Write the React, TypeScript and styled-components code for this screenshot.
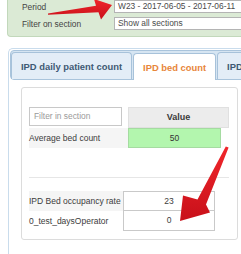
import React from "react";
import styled, { createGlobalStyle } from "styled-components";

const GlobalStyle = createGlobalStyle`
  html, body {
    margin: 0;
    padding: 0;
    background: #fff;
  }
  body {
    font-family: "Liberation Sans", Arial, sans-serif;
    color: #333;
  }
`;

const Page = styled.div`
  position: relative;
  width: 241px;
  height: 254px;
  overflow: hidden;
  padding-left: 7px;
  box-sizing: border-box;
`;

const FilterPanel = styled.div`
  width: 260px;
  box-sizing: border-box;
  background: #dbead5;
  border: 1px solid #c2d8bb;
  border-top: none;
  border-right: none;
  border-bottom-left-radius: 4px;
  padding: 0 0 6px 14px;
  display: grid;
  grid-template-columns: 92px 1fr;
  row-gap: 4px;
  align-items: center;
`;

const FilterLabel = styled.div`
  font-size: 8.4px;
  color: #444;
`;

const SelectBox = styled.div`
  height: 13px;
  box-sizing: border-box;
  border: 1px solid #b4b4b4;
  background: #fff;
  padding-left: 3px;
  font-size: 8.4px;
  line-height: 11px;
  color: #4a4a4a;
  white-space: nowrap;
`;

const TabsWidget = styled.div`
  margin: 11px 0 0 1px;
  width: 260px;
  height: 230px;
  box-sizing: border-box;
  border: 1px solid #c9dcec;
  border-right: none;
  border-top-left-radius: 5px;
  padding: 1px 0 0 1px;
  background: #fff;
`;

const TabNav = styled.div`
  display: flex;
  align-items: flex-end;
  gap: 1px;
  padding-top: 1px;
  border: 1px solid #a9c4dc;
  border-radius: 4px;
  background: #d6e5f2;
`;

const Tab = styled.div<{ $active?: boolean }>`
  flex: none;
  height: 27px;
  box-sizing: border-box;
  padding: 0 9px;
  display: flex;
  align-items: center;
  border: 1px solid #a7c2da;
  border-bottom: none;
  border-radius: 4px 4px 0 0;
  margin-bottom: ${({ $active }) => ($active ? "-1px" : "0")};
  background: ${({ $active }) => ($active ? "#fff" : "#e3edf7")};
  color: ${({ $active }) => ($active ? "#e8863a" : "#3e5a74")};
  font-size: 9.4px;
  font-weight: bold;
  white-space: nowrap;
`;

const ContentPanel = styled.div`
  margin: 7px 0 0 11px;
  width: 217px;
  box-sizing: border-box;
  border: 1px solid #dcdcdc;
  border-radius: 3px;
  padding: 19px 8px 8px 7px;
`;

const HeaderRow = styled.div`
  display: grid;
  grid-template-columns: 93px 101px;
  column-gap: 6px;
  align-items: start;
`;

const FilterInput = styled.div`
  height: 19px;
  box-sizing: border-box;
  border: 1px solid #c8c8c8;
  padding-left: 4px;
  font-size: 8.4px;
  line-height: 17px;
  color: #9a9a9a;
`;

const ValueHeader = styled.div`
  height: 21px;
  box-sizing: border-box;
  border: 1px solid #e0e0e0;
  background: #ececec;
  font-size: 9px;
  font-weight: bold;
  line-height: 19px;
  text-align: center;
  color: #3a3a3a;
`;

const DataRow = styled.div`
  display: grid;
  grid-template-columns: 99px 93px;
  height: 20px;
`;

const RowLabel = styled.div<{ $shaded?: boolean }>`
  display: flex;
  align-items: center;
  font-size: 8.5px;
  color: #3c3c3c;
  white-space: nowrap;
  background: ${({ $shaded }) => ($shaded ? "#f5f5f5" : "transparent")};
`;

const GreenCell = styled.div`
  box-sizing: border-box;
  border: 1px solid #a5dba1;
  background: #b3f6ae;
  font-size: 8.5px;
  line-height: 18px;
  text-align: center;
  color: #333;
`;

const Separator = styled.div`
  height: 1px;
  background: #e6e6e6;
  margin: 29px 0 13px;
`;

const RateTable = styled.div`
  display: grid;
  grid-template-columns: 94px 92px;
  grid-auto-rows: 20px;
`;

const RateCell = styled.div<{ $first?: boolean }>`
  box-sizing: border-box;
  border: 1px solid #c9c9c9;
  border-top: ${({ $first }) => ($first ? "1px solid #c9c9c9" : "none")};
  font-size: 8.5px;
  line-height: 18px;
  text-align: center;
  color: #3c3c3c;
`;

const ArrowLayer = styled.svg`
  position: absolute;
  left: 0;
  top: 0;
  pointer-events: none;
`;

const tabs = ["IPD daily patient count", "IPD bed count", "IPD Bed occupancy rate"];

const rates = [
  { label: "IPD Bed occupancy rate", value: "23", shaded: true },
  { label: "0_test_daysOperator", value: "0", shaded: false },
];

export default function App() {
  return (
    <>
      <GlobalStyle />
      <Page>
        <FilterPanel>
          <FilterLabel>Period</FilterLabel>
          <SelectBox>W23 - 2017-06-05 - 2017-06-11</SelectBox>
          <FilterLabel>Filter on section</FilterLabel>
          <SelectBox>Show all sections</SelectBox>
        </FilterPanel>

        <TabsWidget>
          <TabNav>
            {tabs.map((t, i) => (
              <Tab key={t} $active={i === 1}>
                {t}
              </Tab>
            ))}
          </TabNav>

          <ContentPanel>
            <HeaderRow>
              <FilterInput>Filter in section</FilterInput>
              <ValueHeader>Value</ValueHeader>
            </HeaderRow>
            <DataRow>
              <RowLabel $shaded>Average bed count</RowLabel>
              <GreenCell>50</GreenCell>
            </DataRow>

            <Separator />

            <RateTable>
              {rates.map((r, i) => (
                <React.Fragment key={r.label}>
                  <RowLabel $shaded={r.shaded}>{r.label}</RowLabel>
                  <RateCell $first={i === 0}>{r.value}</RateCell>
                </React.Fragment>
              ))}
            </RateTable>
          </ContentPanel>
        </TabsWidget>

        <ArrowLayer width="241" height="254" viewBox="0 0 241 254">
          <defs>
            <linearGradient id="redShade" x1="0" y1="0" x2="0" y2="1">
              <stop offset="0" stopColor="#f0262b" />
              <stop offset="1" stopColor="#c8101a" />
            </linearGradient>
          </defs>
          {/* arrow pointing at the period select */}
          <path
            d="M48 13.4 L96 5.8 L94 -1 L112 5 L101 19.5 L98.5 12.2 L48 14.8 Z"
            fill="url(#redShade)"
          />
          {/* arrow pointing at the operator value */}
          <path
            d="M225.8 146.5 L228.6 147.6 L206 204.5 L210 212.5 L180 221 L183 195.5 L197.5 199.5 Z"
            fill="url(#redShade)"
          />
        </ArrowLayer>
      </Page>
    </>
  );
}
